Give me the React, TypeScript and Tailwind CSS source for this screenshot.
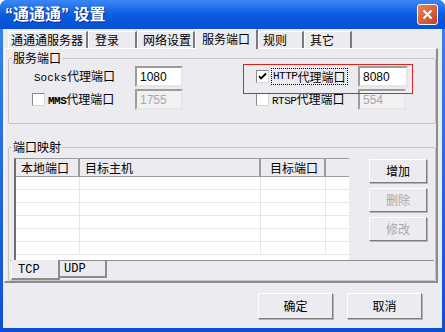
const CJK = "font-['Noto_Sans_CJK_SC',sans-serif]";
const MIX = "font-['Liberation_Mono','Noto_Sans_CJK_SC',monospace]";
const NUM = "font-['Liberation_Sans',sans-serif]";

const TOP_TABS = [
  { label: '通通通服务器', w: 'w-[80px]', pl: 'pl-[2px]' },
  { label: '登录', w: 'w-[49px]', pl: 'pl-[6px]' },
  { label: '网络设置', w: 'w-[58px]', pl: 'pl-[5px]' },
  { label: '服务端口', w: 'w-[63px]', pl: 'pl-[6px]', active: true },
  { label: '规则', w: 'w-[46px]', pl: 'pl-[4px]' },
  { label: '其它', w: 'w-[48px]', pl: 'pl-[5px]' },
];

function Check({ checked = false }: { checked?: boolean }) {
  return (
    <span className="flex w-[13px] h-[13px] shrink-0 items-center justify-center border border-t-[#8a8a8a] border-l-[#8a8a8a] border-b-[#d8d8d8] border-r-[#d8d8d8] bg-white">
      {checked && (
        <svg width="9" height="9" viewBox="0 0 9 9">
          <path d="M1 4 L3 6.5 L8 1.5" stroke="#000" strokeWidth="1.8" fill="none" />
        </svg>
      )}
    </span>
  );
}

function Field({ value, w, disabled = false }: { value: string; w: string; disabled?: boolean }) {
  return (
    <div
      className={`${w} h-[21px] shrink-0 flex items-center pl-[3px] border-2 border-t-[#9c9c9c] border-l-[#9c9c9c] border-b-[#e6e6e6] border-r-[#e6e6e6] ${NUM} text-[12px] ${
        disabled ? 'bg-[#f1f0f3] text-[#a8a8a8]' : 'bg-white text-black'
      }`}
    >
      {value}
    </div>
  );
}

function Btn({ label, disabled = false, w = 'w-[58px]', h = 'h-[24px]' }: { label: string; disabled?: boolean; w?: string; h?: string }) {
  return (
    <div
      className={`${w} ${h} flex items-center justify-center border border-t-white border-l-white border-r-[#7c7c7c] border-b-[#7c7c7c] shadow-[1px_1px_0_#b4b4b4] bg-[#ecebf0] ${CJK} text-[12px] ${
        disabled ? 'text-[#a9a9a9]' : 'text-black'
      }`}
    >
      {label}
    </div>
  );
}

export default function App() {
  const rows = Array.from({ length: 6 });

  return (
    <div className="w-[445px] h-[332px] flex flex-col rounded-t-[7px] bg-gradient-to-b from-[#3c86f0] to-[#0b50d4] overflow-hidden">
      {/* title bar */}
      <div className="h-[29px] flex items-center justify-between pl-[5px] pr-[7px] bg-gradient-to-b from-[#3a88f5] via-[#0a5ce0] to-[#0650d8]">
        <span className={`font-['Liberation_Sans','Noto_Sans_CJK_SC',sans-serif] font-bold text-[16px] text-white leading-none [text-shadow:1px_1px_0_#0a2a80]`}>
          “通通通” 设置
        </span>
        <div className="w-[21px] h-[21px] flex items-center justify-center rounded-[3px] border border-white bg-gradient-to-br from-[#e9845f] to-[#c4401d]">
          <svg width="11" height="11" viewBox="0 0 11 11">
            <path d="M1.5 1.5 L9.5 9.5 M9.5 1.5 L1.5 9.5" stroke="#fff" strokeWidth="2" />
          </svg>
        </div>
      </div>

      {/* client area */}
      <div className="mx-[3px] mb-[4px] flex-1 flex flex-col bg-[#ecebf0]">
        {/* tab strip */}
        <div className="h-[19px] pl-[5px] flex items-end">
          {TOP_TABS.map((t) => (
            <div
              key={t.label}
              className={`${t.w} ${t.pl} ${CJK} text-[12px] leading-none text-black flex items-center border-l border-t border-white border-r-2 border-r-[#7a7a7a] ${
                t.active ? 'h-[20px] -mb-px relative z-10 bg-[#ecebf0] pb-[2px]' : 'h-[17px]'
              }`}
            >
              {t.label}
            </div>
          ))}
        </div>

        {/* tab page */}
        <div className="ml-[1px] w-[434px] h-[235px] border-t border-l border-white border-r-2 border-b-2 border-r-[#8c8c8c] border-b-[#8c8c8c] flex flex-col">
          {/* 服务端口 group */}
          <fieldset className="ml-[3px] mt-[3px] w-[428px] border border-[#c6c6c6] rounded-[2px] pb-[13px]">
            <legend className={`ml-[3px] px-[1px] ${CJK} text-[12px] leading-[12px] text-black`}>服务端口</legend>
            <div className="relative mt-[2px] flex items-center h-[21px]">
              <div className={`w-[126px] pr-[20px] text-right ${CJK} text-[12px] leading-none`}>
                <span className={`${MIX} text-[11px]`}>Socks</span>代理端口
              </div>
              <Field value="1080" w="w-[48px]" />
              <div className="w-[73px]" />
              <Check checked />
              <div className={`ml-[2px] w-[77px] h-[17px] flex items-center pl-[1px] border border-dotted border-black ${CJK} text-[12px] leading-none`}>
                <span className={`${MIX} text-[11px] tracking-[-0.5px]`}>HTTP</span>代理端口
              </div>
              <div className="w-[10px]" />
              <Field value="8080" w="w-[50px]" />
              <div className="absolute left-[234px] top-[-2px] w-[170px] h-[30px] border border-[#dd2222]" />
            </div>
            <div className="mt-[2px] flex items-center h-[21px]">
              <div className="w-[23px]" />
              <Check />
              <div className={`ml-[3px] w-[87px] ${CJK} text-[12px] leading-none`}>
                <span className={`${MIX} text-[11px] font-bold tracking-[-0.5px]`}>MMS</span>代理端口
              </div>
              <Field value="1755" w="w-[48px]" disabled />
              <div className="w-[73px]" />
              <Check />
              <div className={`ml-[3px] w-[86px] ${CJK} text-[12px] leading-none`}>
                <span className={`${MIX} text-[11px] tracking-[-0.5px]`}>RTSP</span>代理端口
              </div>
              <Field value="554" w="w-[48px]" disabled />
            </div>
          </fieldset>

          {/* 端口映射 group */}
          <fieldset className="ml-[3px] mt-[17px] w-[428px] h-[141px] border border-[#c6c6c6] rounded-[2px]">
            <legend className={`ml-[3px] px-[1px] ${CJK} text-[12px] leading-[12px] text-black`}>端口映射</legend>
            <div className="ml-[1px] mt-[5px] w-[424px] border-b border-[#8c8c8c] flex">
              {/* list */}
              <div className="ml-[4px] w-[335px] h-[102px] border-l-2 border-t border-l-[#6e6e6e] border-t-[#9a9a9a] bg-white flex flex-col overflow-hidden">
                <div className={`h-[18px] shrink-0 flex bg-[#ecebf0] ${CJK} text-[12px] leading-none`}>
                  <div className="w-[64px] flex items-center pl-[5px] border-r-2 border-r-[#9a9a9a] border-b border-b-[#9a9a9a]">本地端口</div>
                  <div className="w-[181px] flex items-center pl-[5px] border-r-2 border-r-[#9a9a9a] border-b border-b-[#9a9a9a]">目标主机</div>
                  <div className="w-[65px] flex items-center justify-end pr-[6px] border-r-2 border-r-[#9a9a9a] border-b border-b-[#9a9a9a]">目标端口</div>
                  <div className="flex-1 border-b border-b-[#9a9a9a]" />
                </div>
                {rows.map((_, i) => (
                  <div key={i} className="h-[13px] shrink-0 flex border-b border-[#e6e6e6]">
                    <div className="w-[64px] border-r border-[#e6e6e6]" />
                    <div className="w-[181px] border-r border-[#e6e6e6]" />
                    <div className="w-[65px] border-r border-[#e6e6e6]" />
                    <div className="flex-1" />
                  </div>
                ))}
              </div>
              {/* side buttons */}
              <div className="ml-[20px] mt-[1px] flex flex-col gap-[5px]">
                <Btn label="增加" />
                <Btn label="删除" disabled />
                <Btn label="修改" disabled />
              </div>
            </div>
            {/* bottom tabs */}
            <div className="flex items-start ml-[2px]">
              <div className="w-[49px] h-[20px] -mt-px bg-[#ecebf0] border-l border-l-white border-r-2 border-b-2 border-[#8c8c8c] flex items-end pb-[2px] pl-[6px] font-['Liberation_Mono',monospace] text-[12px] leading-none">
                TCP
              </div>
              <div className="w-[47px] h-[17px] border-r-2 border-b-2 border-[#8c8c8c] flex items-center pl-[4px] font-['Liberation_Mono',monospace] text-[12px] leading-none">
                UDP
              </div>
            </div>
          </fieldset>
        </div>

        {/* dialog buttons */}
        <div className="mt-[10px] pl-[255px] flex gap-[14px]">
          <Btn label="确定" w="w-[75px]" h="h-[26px]" />
          <Btn label="取消" w="w-[75px]" h="h-[26px]" />
        </div>
      </div>
    </div>
  );
}
